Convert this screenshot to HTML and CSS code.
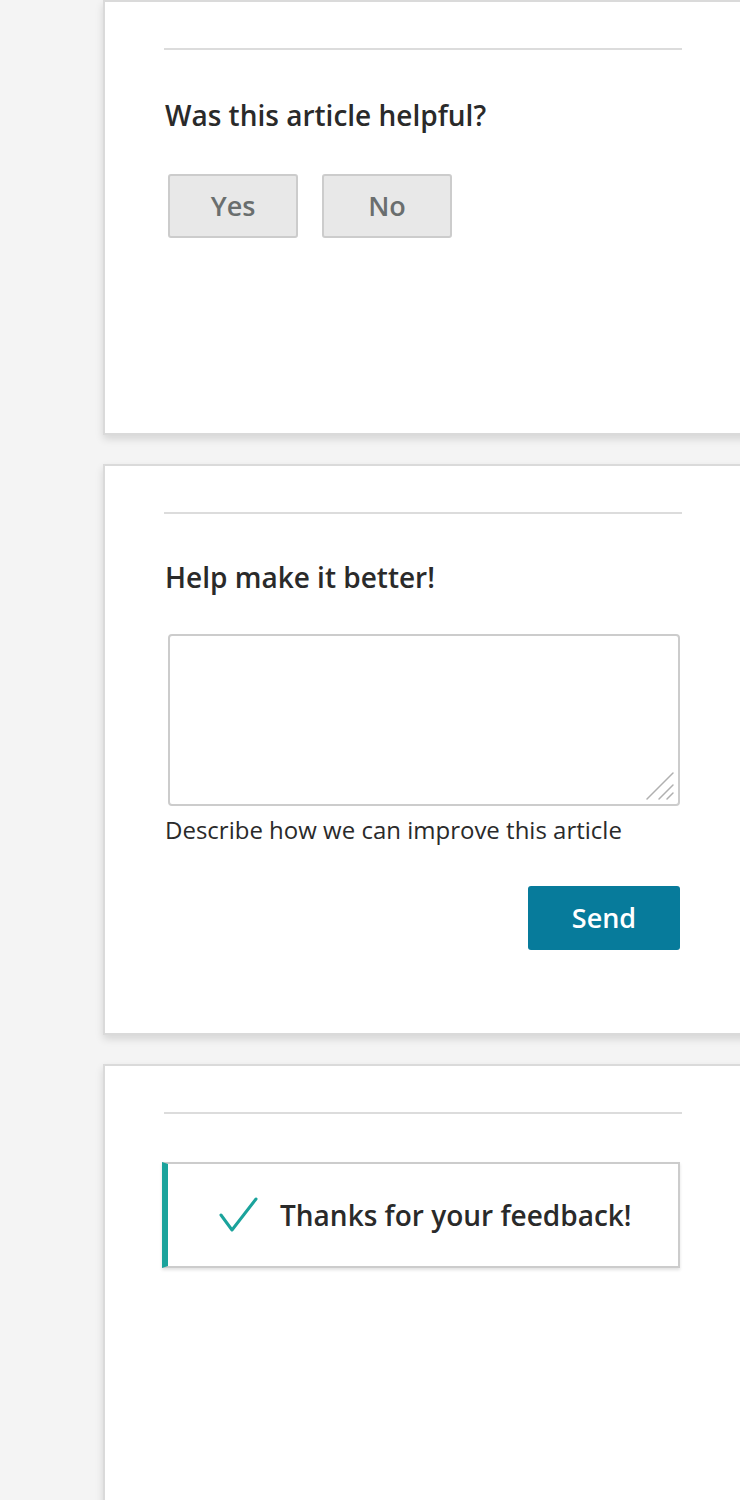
FILE: index.html
```html
<!DOCTYPE html>
<html lang="en">
<head>
<meta charset="utf-8">
<title>Article feedback</title>
<link rel="stylesheet" href="styles.css">
</head>
<body>
<main class="stack">
  <section class="card card-rate">
    <div class="card-inner">
      <hr class="divider">
      <h2 class="title">Was this article helpful?</h2>
      <div class="choices">
        <button class="choice" type="button">Yes</button>
        <button class="choice" type="button">No</button>
      </div>
    </div>
  </section>

  <section class="card card-improve">
    <div class="card-inner">
      <hr class="divider">
      <h2 class="title">Help make it better!</h2>
      <div class="comment-box">
        <textarea class="comment" aria-label="Describe how we can improve this article"></textarea>
        <svg class="grip" width="30" height="30" viewBox="0 0 30 30" aria-hidden="true">
          <path d="M2 28 L28 2 M14 28 L28 14 M22 28 L28 22" fill="none" stroke="#b0b0b0" stroke-width="1.5" stroke-linecap="round"/>
        </svg>
      </div>
      <p class="hint">Describe how we can improve this article</p>
      <div class="actions">
        <button class="send" type="button">Send</button>
      </div>
    </div>
  </section>

  <section class="card card-thanks">
    <div class="card-inner">
      <hr class="divider">
      <div class="notice">
        <svg class="check" width="40" height="36" viewBox="0 0 40 36" aria-hidden="true">
          <path d="M2 18 L13 33 L37 2" fill="none" stroke="#1ba39c" stroke-width="3" stroke-linecap="round" stroke-linejoin="round"/>
        </svg>
        <span class="notice-text">Thanks for your feedback!</span>
      </div>
    </div>
  </section>
</main>
</body>
</html>
```

FILE: styles.css
```css
html, body {
  margin: 0;
  padding: 0;
  background: #f4f4f4;
  overflow: hidden;
}

body {
  font-family: "Open Sans", "Noto Sans", "Liberation Sans", sans-serif;
  color: #2a2a2a;
  width: 740px;
  height: 1500px;
}

.stack {
  display: flex;
  flex-direction: column;
  gap: 29px;
  padding-left: 103px;
}

.card {
  background: #ffffff;
  border: 2px solid #dadada;
  border-right: none;
  width: 700px;
  box-sizing: border-box;
  box-shadow: 0 4px 8px rgba(0, 0, 0, 0.13);
}

.card-rate { height: 435px; }
.card-improve { height: 571px; }
.card-thanks { height: 480px; }

.card-inner {
  padding: 46px 0 0 59px;
  width: 518px;
}

.divider {
  margin: 0;
  border: none;
  height: 2px;
  background: #dcdcdc;
}

.title {
  margin: 47px 0 0 1px;
  font-size: 28px;
  line-height: 36px;
  font-weight: 600;
  color: #2a2a2a;
}

.card-improve .title {
  margin-top: 45px;
}

.choices {
  display: flex;
  gap: 24px;
  margin-top: 41px;
  padding-left: 4px;
}

.choice {
  width: 130px;
  height: 64px;
  box-sizing: border-box;
  border: 2px solid #cccccc;
  border-radius: 3px;
  background: #e8e8e8;
  color: #6a6e6e;
  font-family: inherit;
  font-size: 27px;
  font-weight: 600;
  padding: 0 0 2px;
}

.comment-box {
  position: relative;
  margin: 39px 0 0 4px;
  width: 512px;
  height: 172px;
}

.comment {
  display: block;
  width: 100%;
  height: 100%;
  box-sizing: border-box;
  border: 2px solid #cccccc;
  border-radius: 4px;
  background: #fff;
  resize: none;
  font-family: inherit;
  font-size: 20px;
}

.grip {
  position: absolute;
  right: 5px;
  bottom: 5px;
  pointer-events: none;
}

.hint {
  margin: 8px 0 0 1px;
  font-size: 24px;
  line-height: 32px;
  color: #2a2a2a;
}

.actions {
  display: flex;
  justify-content: flex-end;
  margin-top: 40px;
  padding-right: 2px;
}

.send {
  width: 152px;
  height: 64px;
  border: none;
  border-radius: 3px;
  background: #077b9b;
  color: #ffffff;
  font-family: inherit;
  font-size: 27px;
  font-weight: 600;
  padding: 0 0 2px;
}

.notice {
  display: flex;
  align-items: center;
  gap: 21px;
  margin: 48px 0 0 -2px;
  width: 518px;
  height: 106px;
  box-sizing: border-box;
  border: 2px solid #cccccc;
  border-left: 6px solid #1ba39c;
  padding-left: 51px;
  background: #fff;
  box-shadow: 0 2px 3px rgba(0, 0, 0, 0.12);
}

.check {
  flex: none;
}

.notice-text {
  font-size: 28px;
  font-weight: 600;
  color: #2a2a2a;
}
```
